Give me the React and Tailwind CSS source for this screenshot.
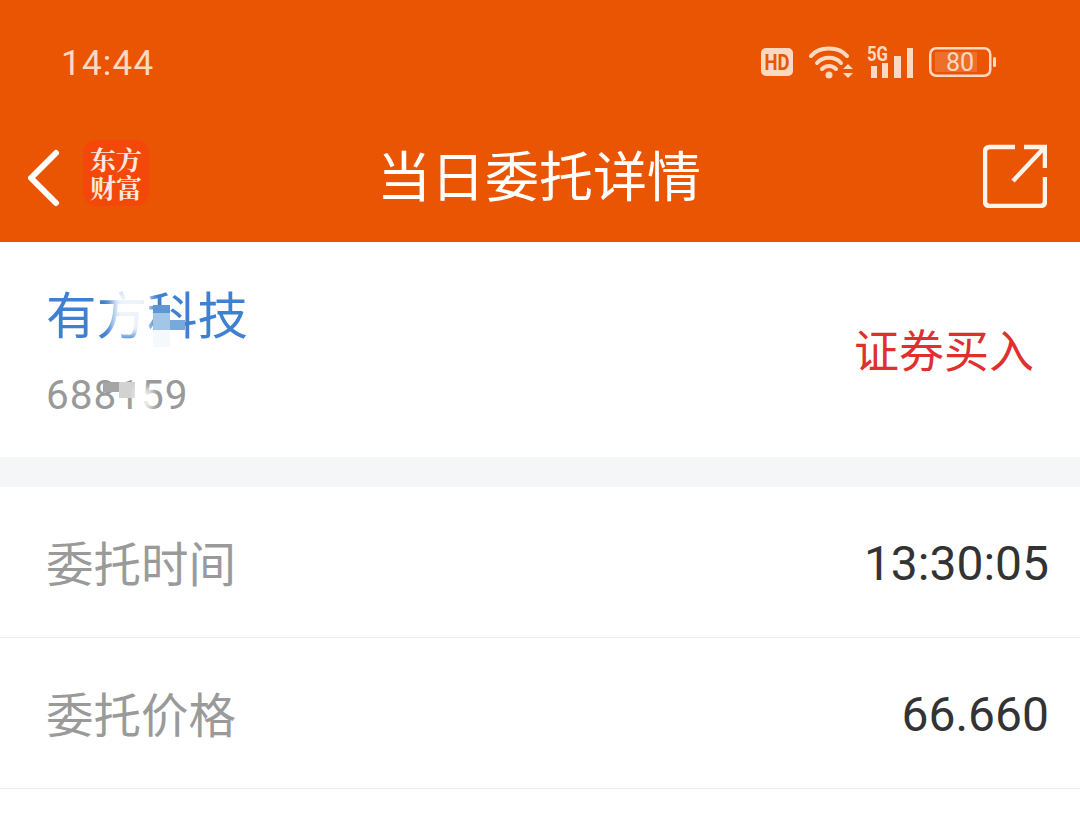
const cjk = "font-['Roboto','Noto_Sans_CJK_SC',sans-serif]";

function StatusIcons() {
  return (
    <div className="flex items-center">
      <svg width="32" height="28" viewBox="0 0 32 28">
        <rect width="32" height="28" rx="5" fill="#fdd9c0" />
        <text x="16" y="22" textAnchor="middle" fontSize="22" fontWeight="700" fontFamily="Roboto" fill="#ea5504" textLength="25" lengthAdjust="spacingAndGlyphs">HD</text>
      </svg>
      <svg width="44" height="33" viewBox="0 0 44 33" className="ml-[16px]" fill="none" stroke="#fdd9c0" strokeWidth="4" strokeLinecap="round">
        <path d="M2 10 C10 0 30 0 38 10" />
        <path d="M8 17 C14 10 26 10 32 17" />
        <path d="M13 23 C17 19 23 19 27 23" />
        <circle cx="20" cy="29" r="3.5" fill="#fdd9c0" stroke="none" />
        <path d="M34 23 L44 23 L39 18 Z M34 27 L44 27 L39 32 Z" fill="#fdd9c0" stroke="none" />
      </svg>
      <svg width="47" height="33" viewBox="0 0 47 33" className="ml-[14px] overflow-visible" fill="#fdd9c0">
        <text x="0" y="15" fontSize="21" fontWeight="700" fontFamily="Roboto" textLength="21" lengthAdjust="spacingAndGlyphs">5G</text>
        <rect x="4" y="20" width="6" height="12" />
        <rect x="15" y="17" width="6" height="15" />
        <rect x="27" y="10" width="7" height="22" />
        <rect x="40" y="2" width="6" height="30" />
      </svg>
      <svg width="67" height="30" viewBox="0 0 67 30" className="ml-[15px]">
        <rect x="1.25" y="1.25" width="60" height="27.5" rx="6" fill="none" stroke="#fdd9c0" strokeWidth="2.5" />
        <rect x="6" y="5" width="42" height="20" rx="1" fill="#fdd9c0" fillOpacity="0.2" />
        <rect x="64" y="10" width="3" height="10" rx="1.5" fill="#fdd9c0" />
        <text x="31" y="24" textAnchor="middle" fontSize="25" fontFamily="Roboto" fill="#fdd9c0">80</text>
      </svg>
    </div>
  );
}

function DetailRow({ label, value }) {
  return (
    <div className="flex h-[151px] items-center justify-between border-b border-[#ececec] pt-[6px] pl-[46px] pr-[31px]">
      <span className="mt-[4px] text-[47.5px] text-[#9a9a9a]">{label}</span>
      <span className="mb-[2px] text-[48px] text-[#333333]">{value}</span>
    </div>
  );
}

export default function App() {
  return (
    <div className={`h-[829px] w-[1080px] overflow-hidden bg-white ${cjk}`}>
      <header className="h-[242px] bg-[#ea5504]">
        <div className="flex h-[126px] items-center justify-between pl-[61px] pr-[84px] pb-[2px]">
          <span className="pt-[4px] text-[35px] tracking-[1.25px] text-[#fdd9c0]">14:44</span>
          <StatusIcons />
        </div>
        <div className="grid h-[116px] grid-cols-[1fr_auto_1fr] items-center pb-[15px] pl-[25px] pr-[33px]">
          <div className="flex items-center">
            <svg width="37" height="58" viewBox="0 0 37 58" fill="none" stroke="#fff" strokeWidth="6" strokeLinecap="round" strokeLinejoin="round" className="mt-[2px]">
              <path d="M31 4 L6 29 L31 54" />
            </svg>
            <div className="mb-[7px] ml-[21px] flex h-[66px] w-[66px] flex-col items-center justify-center rounded-[14px] bg-[#f4480a] text-[26px] font-bold leading-[28px] text-[#fde9dc] font-['Noto_Serif_CJK_SC','Noto_Sans_CJK_SC',sans-serif]">
              <span>东方</span>
              <span>财富</span>
            </div>
          </div>
          <h1 className="ml-[6px] mt-[5px] text-center text-[54px] font-normal leading-[72px] text-white">当日委托详情</h1>
          <svg width="64" height="64" viewBox="0 0 64 64" fill="none" stroke="#fdf3ea" strokeWidth="4.5" className="mb-[1px] justify-self-end">
            <path d="M32 3 H7 Q2 3 2 8 V57 Q2 62 7 62 H57 Q62 62 62 57 V33" />
            <path d="M41 3 H62 V24 M61 4 L30 37" />
          </svg>
        </div>
      </header>

      <section className="flex h-[215px] items-center justify-between pl-[46px] pr-[46px]">
        <div className="relative">
          <div className="pt-[2px] text-[50.5px] leading-[72px] text-[#3f80d0]">有方科技</div>
          <div className="mt-[17px] text-[40.5px] leading-[50px] tracking-[1px] text-[#999999]">688159</div>
          {/* 打码 */}
          <div className="absolute left-[66px] top-[9px] h-[47px] w-[38px] bg-white/90 blur-[4px]" />
          <div className="absolute left-[107px] top-[26px] h-[8px] w-[17px] bg-[#5f97d6]" />
          <div className="absolute left-[107px] top-[34px] h-[17px] w-[17px] bg-[#a3c5e6]" />
          <div className="absolute left-[124px] top-[41px] h-[10px] w-[15px] bg-[#78a8dc]" />
          <div className="absolute left-[107px] top-[51px] h-[17px] w-[17px] bg-[#f5f9fc]" />
          <div className="absolute left-[57px] top-[103px] h-[10px] w-[16px] bg-[#a5a5a5]" />
          <div className="absolute left-[73px] top-[103px] h-[16px] w-[16px] bg-[#d2d2d2]" />
          <div className="absolute left-[89px] top-[109px] h-[22px] w-[18px] bg-white/80 blur-[3px]" />
        </div>
        <span className="mt-[6px] text-[45px] text-[#df3030]">证券买入</span>
      </section>

      <div className="h-[30px] bg-[#f5f6f8]" />

      <DetailRow label="委托时间" value="13:30:05" />
      <DetailRow label="委托价格" value="66.660" />
    </div>
  );
}
